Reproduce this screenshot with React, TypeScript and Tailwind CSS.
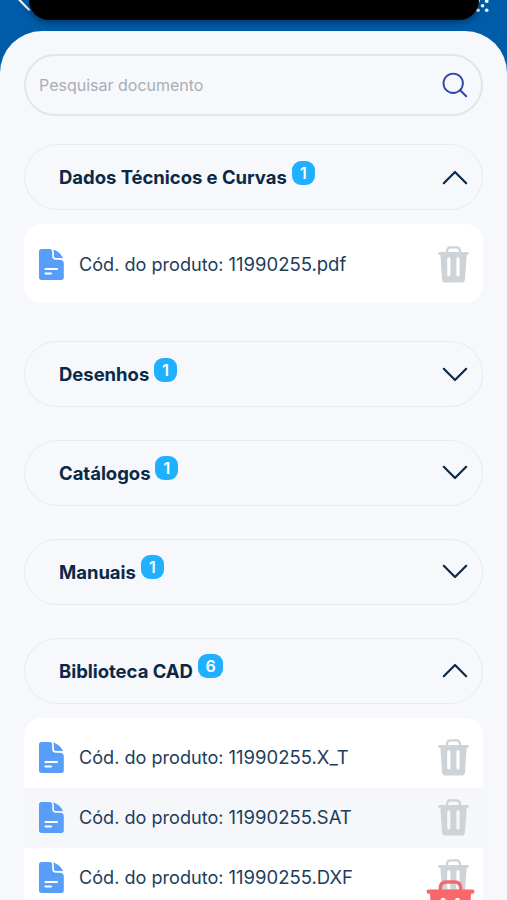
import { useState } from "react";

interface DocumentSection {
  id: string;
  title: string;
  count: number;
  files: string[];
}

const sections: DocumentSection[] = [
  { id: "dados", title: "Dados Técnicos e Curvas", count: 1, files: ["11990255.pdf"] },
  { id: "desenhos", title: "Desenhos", count: 1, files: [] },
  { id: "catalogos", title: "Catálogos", count: 1, files: [] },
  { id: "manuais", title: "Manuais", count: 1, files: [] },
  {
    id: "cad",
    title: "Biblioteca CAD",
    count: 6,
    files: ["11990255.X_T", "11990255.SAT", "11990255.DXF"],
  },
];

function FileIcon() {
  return (
    <svg className="h-[31px] w-[25px] shrink-0" viewBox="0 0 25 31" fill="none" aria-hidden>
      <path
        d="M2.5 0H10.5C12.4 0 13.2 1.2 13.2 3V7C13.2 9.6 14.4 10.8 17 10.8H20.5C23.6 10.8 24.8 12 24.8 14.5V28.5C24.8 30 24 31 22.3 31H2.5C1 31 0 30 0 28.5V2.5C0 1 1 0 2.5 0Z"
        fill="#589df8"
      />
      <path
        d="M14 0.6C19 2 22.6 5.4 24.2 9.8C22.8 9.2 21.5 9.1 19.5 9.1H17.4C15.6 9.1 14.9 8.3 14.9 6.8V4.5C14.9 2.6 14.7 1.6 14 0.6Z"
        fill="#589df8"
      />
      <path d="M6.5 20H18M6.5 24.5H12" stroke="#fff" strokeWidth="2.1" strokeLinecap="round" />
    </svg>
  );
}

function TrashIcon({ className }: { className: string }) {
  return (
    <svg className={className} viewBox="0 0 31 37" fill="none" aria-hidden>
      <path
        d="M9 7V5.4C9 2.8 10.4 1.3 12.8 1.3H18.2C20.6 1.3 22 2.8 22 5.4V7"
        stroke="currentColor"
        strokeWidth="2.2"
      />
      <path
        fillRule="evenodd"
        clipRule="evenodd"
        d="M1.3 6H29.7C31.1 6 31.1 8.8 29.7 8.8H28.6L27.1 33C26.9 35.5 25.6 36.6 23.2 36.6H7.8C5.4 36.6 4.1 35.5 3.9 33L2.4 8.8H1.3C-0.1 8.8 -0.1 6 1.3 6ZM9.2 13V28.8C9.2 31 12.4 31 12.4 28.8V13C12.4 10.8 9.2 10.8 9.2 13ZM18.4 13V28.8C18.4 31 21.6 31 21.6 28.8V13C21.6 10.8 18.4 10.8 18.4 13Z"
        fill="currentColor"
      />
    </svg>
  );
}

function Chevron({ open }: { open: boolean }) {
  return (
    <svg className="ml-auto h-[15px] w-[26px]" viewBox="0 0 26 15" fill="none" aria-hidden>
      <path
        d={open ? "M1.8 13.2L13 2L24.2 13.2" : "M1.8 1.8L13 13L24.2 1.8"}
        stroke="#0b2947"
        strokeWidth="2.2"
        strokeLinecap="round"
        strokeLinejoin="round"
      />
    </svg>
  );
}

function SearchField() {
  const [query, setQuery] = useState("");

  return (
    <label className="flex h-[62px] items-center rounded-full border-2 border-[#e3e5e7] pr-[13.5px] pl-[13px]">
      <input
        value={query}
        onChange={(event) => setQuery(event.target.value)}
        placeholder="Pesquisar documento"
        className="min-w-0 flex-1 bg-transparent text-[16px] text-[#0b2947] outline-none placeholder:text-[#a7aeb5]"
      />
      <svg className="h-[26px] w-[26px]" viewBox="0 0 26 26" fill="none" aria-hidden>
        <circle cx="11.2" cy="11.3" r="9.7" stroke="#2c45a8" strokeWidth="1.9" />
        <path d="M18.2 18.3L24.2 24.3" stroke="#2c45a8" strokeWidth="2" strokeLinecap="round" />
      </svg>
    </label>
  );
}

function FileRow({ file }: { file: string }) {
  return (
    <li className="flex h-[60px] items-center pr-[14px] pl-[15px] even:bg-[#f5f7fb]">
      <FileIcon />
      <span className="mt-px ml-[15px] flex items-baseline text-[18.5px] text-[#1d3d5a]">
        <span className="text-[18.1px]">Cód. do produto:</span>
        <span className="ml-[5px]">{file}</span>
      </span>
      <button type="button" className="ml-auto" aria-label="Excluir">
        <TrashIcon className="h-[37px] w-[31px] text-[#ced3d8]" />
      </button>
    </li>
  );
}

function Section({ section }: { section: DocumentSection }) {
  const [open, setOpen] = useState(section.files.length > 0);

  return (
    <section>
      <button
        type="button"
        onClick={() => setOpen(!open)}
        className="flex h-[66px] w-full items-center rounded-full border border-[#e8eaed] pr-[14px] pl-[34px]"
      >
        <span className="mt-[2px] text-[18.5px] font-bold tracking-[-0.002em] text-[#0b2947]">{section.title}</span>
        <span className="mb-[9px] ml-[5px] flex h-6 min-w-[23px] items-center justify-center rounded-[9px] bg-[#1fb0ff] px-[7.5px] text-[16px] font-semibold text-white">
          {section.count}
        </span>
        <Chevron open={open} />
      </button>
      {open && section.files.length > 0 && (
        <ul className="mt-[14px] mb-[38px] overflow-hidden rounded-[18px] bg-white pt-[10px] pb-[9px]">
          {section.files.map((file) => (
            <FileRow key={file} file={file} />
          ))}
        </ul>
      )}
    </section>
  );
}

export default function App() {
  return (
    <div className="relative h-[900px] w-[507px] overflow-hidden bg-[#005ca8] font-[Inter,sans-serif]">
      <header className="relative h-[30.5px]">
        <svg className="absolute top-0 left-[16px] h-[12px] w-[16px]" viewBox="0 0 16 12" fill="none" aria-hidden>
          <path d="M2 -1.5L13 9.8" stroke="#fff" strokeWidth="2" strokeLinecap="round" />
        </svg>
        <svg className="absolute top-0 left-[468px] h-[14px] w-[22px]" viewBox="0 0 22 14" fill="#fff" aria-hidden>
          <circle cx="10" cy="1" r="1.8" />
          <circle cx="18.7" cy="1.2" r="1.8" />
          <circle cx="14.5" cy="5.8" r="1.8" />
          <circle cx="4" cy="10.3" r="1.8" />
          <circle cx="10" cy="10.3" r="1.8" />
          <circle cx="18.7" cy="10.3" r="1.8" />
        </svg>
        <div className="relative mx-auto h-[20px] w-[450px] rounded-b-[32px] bg-black shadow-[0_2px_7px_rgba(0,20,50,0.55)]" />
      </header>

      <main className="h-[900px] rounded-t-[42px] bg-[#f6f8fc] px-[24px] pt-[23.5px]">
        <SearchField />
        <div className="mt-[28.2px] flex flex-col gap-[32.8px] [&>section:has(ul)+section]:-mt-[32.8px]">
          {sections.map((section) => (
            <Section key={section.id} section={section} />
          ))}
        </div>
      </main>

      <button type="button" className="absolute top-[880px] left-[426px]" aria-label="Excluir todos">
        <TrashIcon className="h-[58px] w-[49px] text-[#fa676b]" />
      </button>
    </div>
  );
}
